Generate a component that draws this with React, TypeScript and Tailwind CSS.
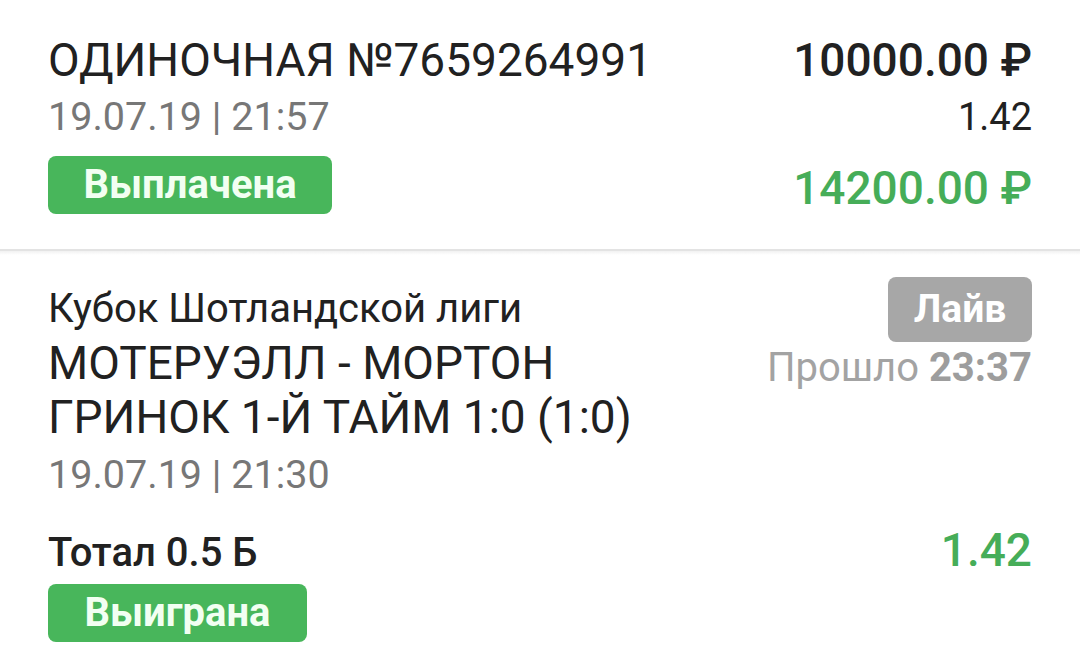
const Badge = ({ label, width, tone }: { label: string; width: string; tone: 'green' | 'gray' }) => {
  return (
    <div
      className={`${width} flex items-center justify-center rounded-[8px] font-bold leading-none ${
        tone === 'green' ? 'h-[58px] bg-[#48b65b] text-[40px] text-[#f2fff2]' : 'h-[65px] bg-[#a7a7a7] text-[39px] text-white'
      }`}
    >
      {label}
    </div>
  );
};

const App = () => {
  return (
    <div className="min-h-screen w-full bg-white text-[#212121]" style={{ fontFamily: "Roboto, 'Noto Sans', sans-serif" }}>
      {/* bet summary */}
      <section className="flex justify-between pl-[48px] pr-[48px] pt-[32px] pb-[33px]">
        <div className="flex flex-col">
          <div className="text-[46px] leading-[56px]">ОДИНОЧНАЯ №7659264991</div>
          <div className="mt-[7px] text-[39.5px] leading-[44px] text-[#777777]">19.07.19 | 21:57</div>
          <div className="mt-[17px]">
            <Badge label="Выплачена" width="w-[284px]" tone="green" />
          </div>
        </div>
        <div className="flex flex-col items-end">
          <div className="text-[46px] font-medium leading-[56px]">10000.00 ₽</div>
          <div className="mt-[7px] text-[38px] leading-[44px]">1.42</div>
          <div className="mt-[21px] text-[46px] font-medium leading-[56px] text-[#46ad58]">14200.00 ₽</div>
        </div>
      </section>

      <div className="h-[2px] bg-[#e3e3e3]" />
      <div className="h-[4px] bg-gradient-to-b from-[#f1f1f1] to-white" />

      {/* event */}
      <section className="pl-[48px] pr-[48px] pt-[22px]">
        <div className="flex justify-between">
          <div className="mt-[10px] flex w-[620px] flex-col">
            <div className="text-[40px] leading-[44px]">Кубок Шотландской лиги</div>
            <div className="mt-[5px] text-[46px] leading-[54px]">МОТЕРУЭЛЛ - МОРТОН ГРИНОК 1-Й ТАЙМ 1:0 (1:0)</div>
            <div className="mt-[9px] text-[39.5px] leading-[44px] text-[#777777]">19.07.19 | 21:30</div>
          </div>
          <div className="flex flex-col items-end">
            <Badge label="Лайв" width="w-[144px]" tone="gray" />
            <div className="mt-[3px] text-[40px] leading-[46px] text-[#a3a3a3]">
              Прошло <span className="font-bold text-[#9d9d9d]">23:37</span>
            </div>
          </div>
        </div>
        <div className="mt-[31px] flex items-baseline justify-between">
          <div className="text-[40px] font-medium leading-[44px]">Тотал 0.5 Б</div>
          <div className="text-[46px] font-medium leading-[44px] text-[#46ad58]">1.42</div>
        </div>
        <div className="mt-[9px]">
          <Badge label="Выиграна" width="w-[259px]" tone="green" />
        </div>
      </section>
    </div>
  );
};

export default App;
